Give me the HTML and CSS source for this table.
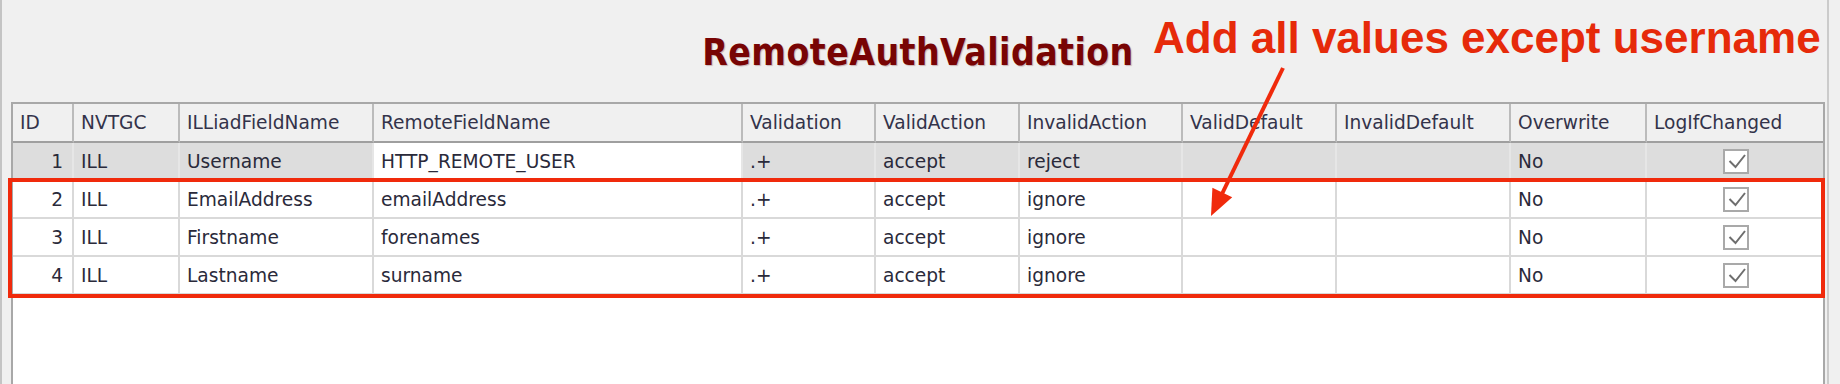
FILE: index.html
```html
<!DOCTYPE html>
<html lang="en">
<head>
<meta charset="utf-8">
<title>RemoteAuthValidation</title>
<link rel="stylesheet" href="styles.css">
</head>
<body>
<div class="window">
  <div class="caption">
    <h1 class="title">RemoteAuthValidation</h1>
  </div>
  <div class="grid">
    <table class="data">
      <colgroup>
        <col class="c-id"><col class="c-nvtgc"><col class="c-field"><col class="c-remote">
        <col class="c-val"><col class="c-va"><col class="c-ia"><col class="c-vd">
        <col class="c-id2"><col class="c-ow"><col class="c-log">
      </colgroup>
      <thead>
        <tr>
          <th>ID</th><th>NVTGC</th><th>ILLiadFieldName</th><th>RemoteFieldName</th>
          <th>Validation</th><th>ValidAction</th><th>InvalidAction</th><th>ValidDefault</th>
          <th>InvalidDefault</th><th>Overwrite</th><th class="last">LogIfChanged</th>
        </tr>
      </thead>
      <tbody>
        <tr class="selected">
          <td class="num">1</td><td>ILL</td><td>Username</td><td class="current">HTTP_REMOTE_USER</td>
          <td>.+</td><td>accept</td><td>reject</td><td></td><td></td><td>No</td>
          <td class="last chk"><span class="check"><svg width="26" height="25" viewBox="0 0 26 25"><rect x="1" y="1" width="24" height="23" fill="#fff" stroke="#a9a9a9" stroke-width="2"/><polyline points="6.5,12 12.5,18 22,6" fill="none" stroke="#6e6e6e" stroke-width="2"/></svg></span></td>
        </tr>
        <tr>
          <td class="num">2</td><td>ILL</td><td>EmailAddress</td><td>emailAddress</td>
          <td>.+</td><td>accept</td><td>ignore</td><td></td><td></td><td>No</td>
          <td class="last chk"><span class="check"><svg width="26" height="25" viewBox="0 0 26 25"><rect x="1" y="1" width="24" height="23" fill="#fff" stroke="#a9a9a9" stroke-width="2"/><polyline points="6.5,12 12.5,18 22,6" fill="none" stroke="#6e6e6e" stroke-width="2"/></svg></span></td>
        </tr>
        <tr>
          <td class="num">3</td><td>ILL</td><td>Firstname</td><td>forenames</td>
          <td>.+</td><td>accept</td><td>ignore</td><td></td><td></td><td>No</td>
          <td class="last chk"><span class="check"><svg width="26" height="25" viewBox="0 0 26 25"><rect x="1" y="1" width="24" height="23" fill="#fff" stroke="#a9a9a9" stroke-width="2"/><polyline points="6.5,12 12.5,18 22,6" fill="none" stroke="#6e6e6e" stroke-width="2"/></svg></span></td>
        </tr>
        <tr>
          <td class="num">4</td><td>ILL</td><td>Lastname</td><td>surname</td>
          <td>.+</td><td>accept</td><td>ignore</td><td></td><td></td><td>No</td>
          <td class="last chk"><span class="check"><svg width="26" height="25" viewBox="0 0 26 25"><rect x="1" y="1" width="24" height="23" fill="#fff" stroke="#a9a9a9" stroke-width="2"/><polyline points="6.5,12 12.5,18 22,6" fill="none" stroke="#6e6e6e" stroke-width="2"/></svg></span></td>
        </tr>
      </tbody>
    </table>
  </div>

  <div class="note">Add all values except username</div>
  <svg class="arrow" width="110" height="165" viewBox="0 0 110 165">
    <line x1="93" y1="8" x2="31" y2="136" stroke="#f02a0c" stroke-width="4"/>
    <polygon points="21,156 22.4,127.7 42.2,137.3" fill="#f02a0c"/>
  </svg>
  <div class="highlight"></div>
</div>
</body>
</html>
```

FILE: styles.css
```css
html, body {
  margin: 0;
  padding: 0;
  background: #f0f0f0;
}

body {
  width: 1840px;
  height: 384px;
  overflow: hidden;
  font-family: "DejaVu Sans", "Noto Sans", sans-serif;
}

.window {
  position: relative;
  box-sizing: border-box;
  width: 1829px;
  height: 384px;
  border-left: 2px solid #c4c4c4;
  border-right: 2px solid #cbcbcb;
  padding-left: 9px;
  padding-right: 2px;
  display: flex;
  flex-direction: column;
  overflow: hidden;
}

.caption {
  box-sizing: border-box;
  height: 102px;
  padding-top: 31px;
  flex: none;
  display: flex;
  justify-content: center;
}

.title {
  margin: 0;
  font-family: "DejaVu Sans Condensed", "DejaVu Sans", sans-serif;
  font-stretch: condensed;
  font-weight: bold;
  font-size: 37px;
  letter-spacing: 0.45px;
  line-height: 44px;
  color: #780404;
  text-shadow: 1px 1px 1px rgba(90, 0, 0, 0.25);
}

.grid {
  box-sizing: border-box;
  width: 1814px;
  height: 320px;
  flex: none;
  border: 2px solid #a8a8a8;
  background: #ffffff;
}

.data {
  table-layout: fixed;
  width: 1810px;
  border-collapse: separate;
  border-spacing: 0;
  font-size: 18.6px;
  color: #2a2a3a;
}

.c-id { width: 61px; }
.c-nvtgc { width: 106px; }
.c-field { width: 194px; }
.c-remote { width: 369px; }
.c-val { width: 133px; }
.c-va { width: 144px; }
.c-ia { width: 163px; }
.c-vd { width: 154px; }
.c-id2 { width: 174px; }
.c-ow { width: 136px; }
.c-log { width: 176px; }

.data th,
.data td {
  box-sizing: border-box;
  padding: 0 7px;
  text-align: left;
  white-space: nowrap;
  overflow: hidden;
  font-weight: normal;
}

.data thead tr {
  height: 39px;
}

.data th {
  background: #f0f0f0;
  border-right: 2px solid #bbbbbb;
  border-bottom: 2px solid #9f9f9f;
  color: #33334a;
}

.data tbody tr {
  height: 38.1px;
}

.data td {
  border-right: 2px solid #d9d9d9;
  border-bottom: 2px solid #d9d9d9;
  background: #ffffff;
}

.data th.last,
.data td.last {
  border-right: none;
}

.data tr.selected td {
  background: #dddddd;
  border-right-color: #e6e6e6;
  border-bottom-color: #d2d2d2;
}

.data tr.selected td.current {
  background: #ffffff;
}

.data td.num {
  text-align: right;
  padding-right: 9px;
}

.data td.chk {
  text-align: center;
  padding: 0;
  line-height: 0;
}

.check {
  display: inline-block;
  width: 26px;
  height: 25px;
  margin-left: 2px;
}

.note {
  position: absolute;
  left: 1151px;
  top: 13px;
  font-family: "Liberation Sans", Arial, sans-serif;
  font-weight: bold;
  font-size: 44px;
  line-height: 50px;
  color: #e62a0a;
  white-space: nowrap;
}

.arrow {
  position: absolute;
  left: 1188px;
  top: 60px;
}

.highlight {
  position: absolute;
  box-sizing: border-box;
  left: 6px;
  top: 178px;
  width: 1817px;
  height: 120px;
  border: 4px solid #f02a0c;
}
```
